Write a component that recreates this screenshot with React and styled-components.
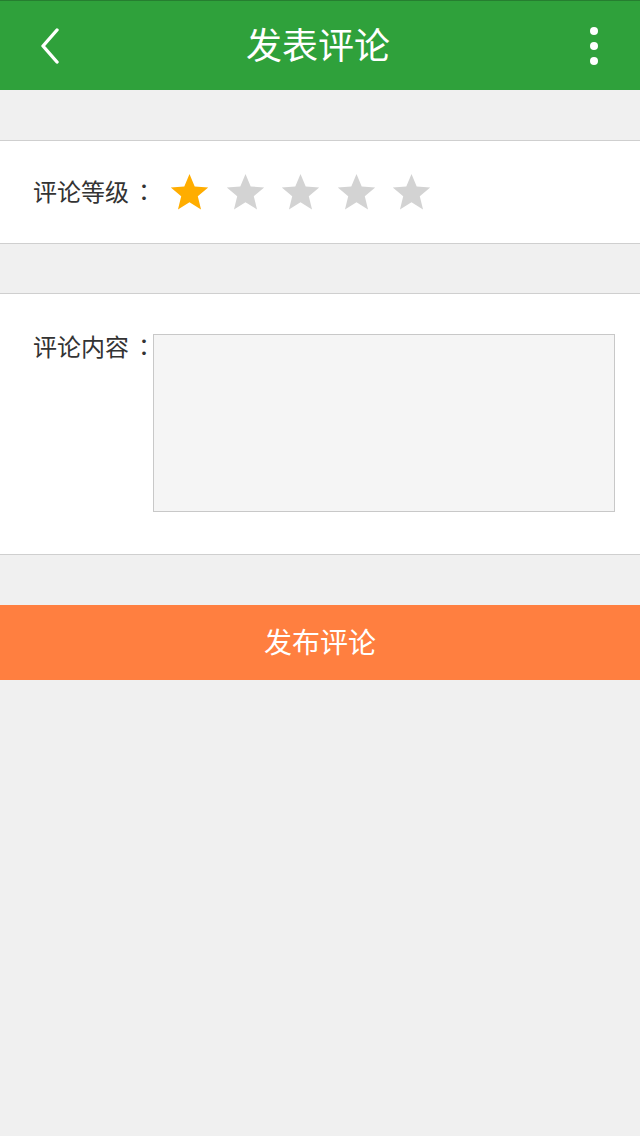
import styled, { createGlobalStyle } from "styled-components";

const GlobalStyle = createGlobalStyle`
  html, body {
    margin: 0;
    padding: 0;
    background: #f0f0f0;
    font-family: "Noto Sans CJK SC", "Noto Sans", sans-serif;
  }
`;

const Page = styled.div`
  min-height: 1136px;
  background: #f0f0f0;
`;

const Header = styled.header`
  height: 89px;
  background: #2fa13b;
  border-top: 1px solid #267e30;
  display: flex;
  align-items: center;
  justify-content: space-between;
  padding: 0 26px 0 30px;
  box-sizing: content-box;
`;

const IconButton = styled.button`
  width: 40px;
  height: 50px;
  padding: 0;
  border: none;
  background: none;
  display: flex;
  align-items: center;
  justify-content: center;
  color: #fff;
`;

const Title = styled.h1`
  margin: 0 0 6px -8px;
  font-size: 36px;
  font-weight: 400;
  color: #fff;
`;

const Section = styled.section`
  margin-top: ${(p) => p.$gap || "50px"};
  background: #fff;
  border-top: 1px solid #cfcfcf;
  border-bottom: 1px solid #cfcfcf;
  display: flex;
  align-items: ${(p) => (p.$top ? "flex-start" : "center")};
  padding: ${(p) => p.$pad};
`;

const Label = styled.span`
  width: 120px;
  flex-shrink: 0;
  font-size: 24px;
  color: #333;
  line-height: 34px;
  white-space: nowrap;
  margin-top: ${(p) => p.$shift || "0"};
`;

const Colon = styled.span`
  font-family: "Noto Sans CJK TC", sans-serif;
  margin-left: 3px;
`;

const Stars = styled.div`
  display: flex;
  gap: 16.5px;
  margin-left: 17px;
`;

const Star = styled.svg`
  width: 39px;
  height: 39px;
  display: block;
  fill: ${(p) => (p.$on ? "#ffad00" : "#d3d3d3")};
`;

const TextArea = styled.textarea`
  width: 462px;
  height: 178px;
  box-sizing: border-box;
  background: #f5f5f5;
  border: 1px solid #c8c8c8;
  border-radius: 0;
  resize: none;
  outline: none;
  margin: 0;
  font-family: inherit;
  font-size: 22px;
`;

const Submit = styled.button`
  display: block;
  width: 100%;
  height: 75px;
  margin-top: 50px;
  padding: 0 0 4px;
  border: none;
  background: #ff7f40;
  color: #fff;
  font-family: inherit;
  font-size: 28px;
`;

const StarIcon = ({ on }) => (
  <Star $on={on} viewBox="0 0 24 24">
    <path d="M12 0.6l3.2 7.7 8.3 0.6-6.4 5.4 2 8.1L12 18l-7.1 4.4 2-8.1L0.5 8.9l8.3-0.6z" />
  </Star>
);

const App = () => {
  const rating = 1;
  return (
    <Page>
      <GlobalStyle />
      <Header>
        <IconButton aria-label="back">
          <svg width="22" height="36" viewBox="0 0 22 36">
            <path d="M18 2L4 18l14 16" fill="none" stroke="#fff" strokeWidth="3.4" strokeLinecap="round" strokeLinejoin="round" />
          </svg>
        </IconButton>
        <Title>发表评论</Title>
        <IconButton aria-label="more">
          <svg width="10" height="40" viewBox="0 0 10 40">
            <circle cx="5" cy="5" r="4" fill="#fff" />
            <circle cx="5" cy="20" r="4" fill="#fff" />
            <circle cx="5" cy="35" r="4" fill="#fff" />
          </svg>
        </IconButton>
      </Header>

      <Section $pad="32px 0 31px 33px">
        <Label $shift="-3px">评论等级<Colon>：</Colon></Label>
        <Stars>
          {[1, 2, 3, 4, 5].map((n) => (
            <StarIcon key={n} on={n <= rating} />
          ))}
        </Stars>
      </Section>

      <Section $top $gap="49px" $pad="40px 0 42px 33px">
        <Label $shift="-5px">评论内容<Colon>：</Colon></Label>
        <TextArea />
      </Section>

      <Submit>发布评论</Submit>
    </Page>
  );
};

export default App;
